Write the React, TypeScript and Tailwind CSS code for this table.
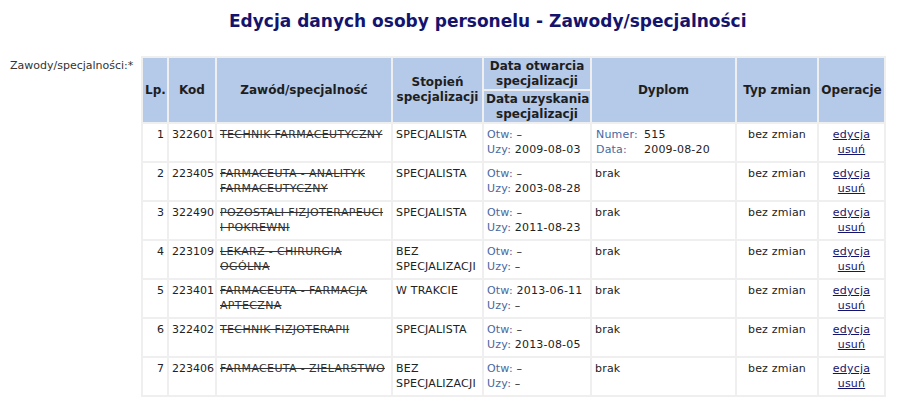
import React from 'react';

type Row = {
  lp: number;
  kod: string;
  zawod: string;
  stopien: string;
  otw: string;
  uzy: string;
  dyplom?: { numer: string; data: string };
};

const rows: Row[] = [
  { lp: 1, kod: '322601', zawod: 'TECHNIK FARMACEUTYCZNY', stopien: 'SPECJALISTA', otw: '–', uzy: '2009-08-03', dyplom: { numer: '515', data: '2009-08-20' } },
  { lp: 2, kod: '223405', zawod: 'FARMACEUTA - ANALITYK FARMACEUTYCZNY', stopien: 'SPECJALISTA', otw: '–', uzy: '2003-08-28' },
  { lp: 3, kod: '322490', zawod: 'POZOSTALI FIZJOTERAPEUCI I POKREWNI', stopien: 'SPECJALISTA', otw: '–', uzy: '2011-08-23' },
  { lp: 4, kod: '223109', zawod: 'LEKARZ - CHIRURGIA OGÓLNA', stopien: 'BEZ SPECJALIZACJI', otw: '–', uzy: '–' },
  { lp: 5, kod: '223401', zawod: 'FARMACEUTA - FARMACJA APTECZNA', stopien: 'W TRAKCIE', otw: '2013-06-11', uzy: '–' },
  { lp: 6, kod: '322402', zawod: 'TECHNIK FIZJOTERAPII', stopien: 'SPECJALISTA', otw: '–', uzy: '2013-08-05' },
  { lp: 7, kod: '223406', zawod: 'FARMACEUTA - ZIELARSTWO', stopien: 'BEZ SPECJALIZACJI', otw: '–', uzy: '–' },
];

const th = 'bg-[#b5c9e8] font-bold text-[12px] text-[#1e1e1e] text-center align-middle leading-[15px] px-[2px]';
const td = 'bg-white align-top leading-[15px] pt-[3px] pb-[4px] px-[3px]';

export default function App() {
  return (
    <div className="w-[904px] h-[409px] overflow-hidden bg-white font-['DejaVu_Sans',Verdana,sans-serif] text-[11px] text-[#222]">
      {/* Page title */}
      <h1 className="pt-[11px] pl-[229px] text-[17px] font-bold text-[#14146e] leading-[21px] whitespace-nowrap">
        Edycja danych osoby personelu - Zawody/specjalności
      </h1>

      <div className="flex items-start mt-[24px]">
        <div className="w-[141px] shrink-0 pl-[10px] pt-[3px] text-[11px] text-[#333] leading-[14px]">Zawody/specjalności:*</div>

        <table className="table-fixed w-[745px] border-separate border-spacing-[2px] bg-[#efefef]">
          <colgroup>
            <col className="w-[24px]" />
            <col className="w-[46px]" />
            <col className="w-[174px]" />
            <col className="w-[89px]" />
            <col className="w-[106px]" />
            <col className="w-[143px]" />
            <col className="w-[80px]" />
            <col className="w-[65px]" />
          </colgroup>
          <thead>
            <tr>
              <th rowSpan={2} className={th}>Lp.</th>
              <th rowSpan={2} className={th}>Kod</th>
              <th rowSpan={2} className={th}>Zawód/specjalność</th>
              <th rowSpan={2} className={th}>Stopień<br />specjalizacji</th>
              <th className={`${th} h-[31px] whitespace-nowrap`}>Data otwarcia<br />specjalizacji</th>
              <th rowSpan={2} className={th}>Dyplom</th>
              <th rowSpan={2} className={`${th} whitespace-nowrap`}>Typ zmian</th>
              <th rowSpan={2} className={th}>Operacje</th>
            </tr>
            <tr>
              <th className={`${th} h-[31px] whitespace-nowrap`}>Data uzyskania<br />specjalizacji</th>
            </tr>
          </thead>
          <tbody>
            {rows.map((r) => (
              <tr key={r.lp}>
                <td className={`${td} text-right`}>{r.lp}</td>
                <td className={td}>{r.kod}</td>
                <td className={`${td} line-through text-[#333] tracking-[0.35px]`}>{r.zawod}</td>
                <td className={`${td} tracking-[0.2px]`}>{r.stopien}</td>
                <td className={`${td} whitespace-nowrap tracking-[0.2px]`}>
                  <div><span className="text-[#4868a0]">Otw:</span> {r.otw}</div>
                  <div><span className="text-[#4868a0]">Uzy:</span> {r.uzy}</div>
                </td>
                <td className={`${td} tracking-[0.2px]`}>
                  {r.dyplom ? (
                    <div className="grid grid-cols-[48px_auto] pl-[1px]">
                      <span className="text-[#4868a0]">Numer:</span>
                      <span>{r.dyplom.numer}</span>
                      <span className="text-[#4868a0]">Data:</span>
                      <span>{r.dyplom.data}</span>
                    </div>
                  ) : (
                    'brak'
                  )}
                </td>
                <td className={`${td} text-center tracking-[0.2px]`}>bez zmian</td>
                <td className={`${td} text-center align-middle tracking-[0.2px]`}>
                  <a href="#" className="text-[#14146e] underline block">edycja</a>
                  <a href="#" className="text-[#14146e] underline block">usuń</a>
                </td>
              </tr>
            ))}
          </tbody>
        </table>
      </div>
    </div>
  );
}
